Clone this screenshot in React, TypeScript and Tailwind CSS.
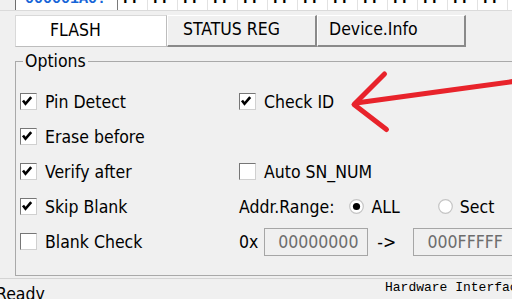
import React from "react";

function Check({ checked }: { checked?: boolean }) {
  return (
    <span className="w-[17px] h-[17px] shrink-0 bg-white border border-t-[#767676] border-l-[#767676] border-r-[#d0d0d0] border-b-[#d0d0d0] flex items-start justify-start">
      {checked && (
        <svg width="15" height="15" viewBox="0 0 15 15" className="block">
          <path d="M2 6.5 L4.5 9.8 L10.2 3.2" stroke="#000" strokeWidth="2.6" fill="none" strokeLinecap="butt" strokeLinejoin="miter" />
        </svg>
      )}
    </span>
  );
}

function Radio({ checked }: { checked?: boolean }) {
  return (
    <svg width="15" height="15" viewBox="0 0 15 15" className="block shrink-0">
      <circle cx="7.5" cy="7.5" r="6.8" fill="#ffffff" stroke="#c4c4c4" strokeWidth="1.2" />
      {checked && <circle cx="7.5" cy="7.5" r="3.6" fill="#000" />}
    </svg>
  );
}

function CheckRow({ label, checked }: { label: string; checked?: boolean }) {
  return (
    <div className="flex items-center gap-[8px]">
      <Check checked={checked} />
      <span>{label}</span>
    </div>
  );
}

export default function App() {
  const cells = Array.from({ length: 14 }, (_, i) => i);
  return (
    <div className="relative w-[512px] h-[299px] overflow-hidden bg-[#f0f0f0] text-black font-['DejaVu_Sans_Condensed','Liberation_Sans',sans-serif] text-[17.5px] leading-[18px]">
      {/* top hex strip */}
      <div className="flex h-[10px] overflow-hidden">
        <div className="w-[15px] shrink-0" />
        <div className="flex-1 flex bg-white border-l border-[#6e6e6e] overflow-hidden">
          <div className="w-[101px] shrink-0 pl-[9px]">
            <div className="-mt-[8px] font-['Liberation_Mono',monospace] font-bold text-[15px] leading-[15px] text-[#1565d8]">000001A0:</div>
          </div>
          {cells.map((i) => (
            <div key={i} className={`w-[30px] shrink-0 border-l pl-[5px] ${i === 0 ? "border-[#7a7a7a]" : "border-[#e2e2e2]"}`}>
              <div className="-mt-[8px] font-['Liberation_Mono',monospace] font-bold text-[15px] leading-[15px] text-black">FF</div>
            </div>
          ))}
        </div>
      </div>
      <div className="h-px bg-[#dadada]" />

      {/* tabs */}
      <div className="flex mt-[4px] ml-[15px] h-[32px]">
        <div className="w-[152px] shrink-0 bg-white border border-[#d9d9d9] border-r-[#bdbdbd] border-b-[#bdbdbd] pl-[34px] pb-[3px] flex items-center">FLASH</div>
        <div className="w-[150px] shrink-0 border-t border-l border-t-white border-l-white border-r-2 border-b-2 border-r-[#8a8a8a] border-b-[#8a8a8a] pl-[15px] pb-[3px] flex items-center">STATUS REG</div>
        <div className="w-[149px] shrink-0 border-t border-l border-t-white border-l-white border-r-2 border-b-2 border-r-[#8a8a8a] border-b-[#8a8a8a] pl-[11px] pb-[3px] flex items-center">Device.Info</div>
      </div>

      {/* options group */}
      <fieldset className="mt-[5px] ml-[15px] w-[520px] h-[224px] border border-[#a9a9a9] pl-[4px] pt-[14px]">
        <legend className="ml-[3px] px-[2px] leading-[18px]">Options</legend>
        <div className="grid grid-cols-[219px_1fr] auto-rows-[35px] items-center">
          <CheckRow label="Pin Detect" checked />
          <CheckRow label="Check ID" checked />

          <CheckRow label="Erase before" checked />
          <div />

          <CheckRow label="Verify after" checked />
          <CheckRow label="Auto SN_NUM" />

          <CheckRow label="Skip Blank" checked />
          <div className="flex items-center">
            <span>Addr.Range:</span>
            <span className="ml-[14px]"><Radio checked /></span>
            <span className="ml-[8px]">ALL</span>
            <span className="ml-[38px]"><Radio /></span>
            <span className="ml-[7px]">Sect</span>
          </div>

          <CheckRow label="Blank Check" />
          <div className="flex items-center">
            <span>0x</span>
            <div className="ml-[6px] w-[104px] h-[28px] shrink-0 border border-[#a6a6a6] flex items-center justify-center text-[#6d6d6d] pl-[4px]">00000000</div>
            <span className="ml-[9px]">-&gt;</span>
            <div className="ml-[17px] w-[104px] h-[28px] shrink-0 border border-[#a6a6a6] flex items-center justify-center text-[#6d6d6d]">000FFFFF</div>
          </div>
        </div>
      </fieldset>

      {/* status bar */}
      <div className="mt-[2px] h-px bg-[#d4d4d4]" />
      <div className="flex items-start">
        <div className="w-[389px] shrink-0 -ml-[4px] mt-[6px]">Ready</div>
        <div className="mt-[2px] font-['Liberation_Mono',monospace] text-[13px] leading-[13px] whitespace-nowrap">Hardware Interface</div>
      </div>

      {/* red annotation arrow */}
      <svg className="absolute left-0 top-0 pointer-events-none" width="512" height="299" viewBox="0 0 512 299">
        <g stroke="#e8232b" strokeWidth="5" strokeLinecap="round" strokeLinejoin="round" fill="none">
          <path d="M356 103 L440 91.5 L513 81.5" />
          <path d="M384.5 74 L354 104.5 L386.5 129.5" />
        </g>
      </svg>
    </div>
  );
}
